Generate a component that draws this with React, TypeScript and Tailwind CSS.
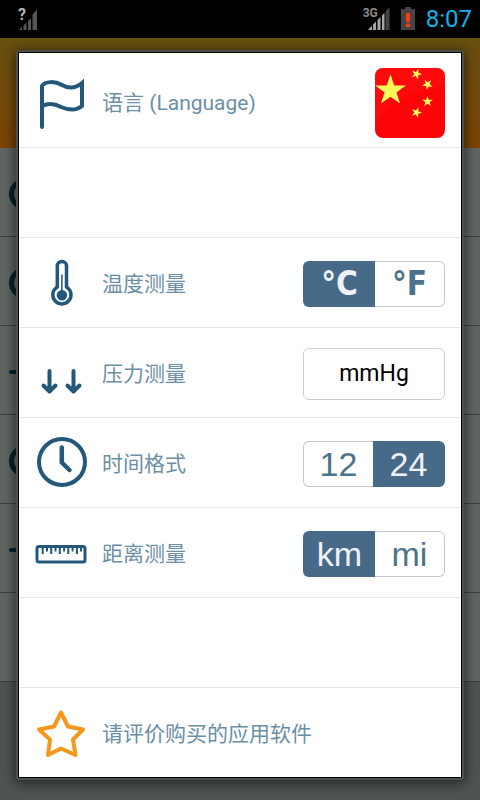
import { useState, type ReactNode } from "react";

const iconColor = "#23587a";

function FlagIcon() {
  return (
    <svg viewBox="0 0 54 54" className="w-[54px] h-[54px] shrink-0" fill="none" stroke={iconColor} strokeWidth="4" strokeLinecap="round">
      <path d="M7 51V10c3-5 13-5 20-1 7 4 14 3 20-2v23c-6 5-14 4-21 1-7-4-13-4-19-1" />
    </svg>
  );
}

function ThermometerIcon() {
  return (
    <svg viewBox="0 0 54 54" className="w-[54px] h-[54px] shrink-0" fill="none" stroke={iconColor} strokeWidth="3.500">
      <path d="M22.300 30V9a4.600 4.600 0 0 1 9.200 0v21a9.100 9.100 0 1 1-9.200 0Z" strokeLinejoin="round" />
      <circle cx="26.900" cy="38.300" r="5.200" fill={iconColor} stroke="none" />
      <path d="M26.900 17.500V36" strokeWidth="1.500" />
    </svg>
  );
}

function PressureIcon() {
  return (
    <svg viewBox="0 0 54 54" className="w-[54px] h-[54px] shrink-0" fill="none" stroke={iconColor} strokeWidth="4" strokeLinecap="round" strokeLinejoin="round">
      <path d="M14.500 24v20M8.500 38.500l6 6 6-6" />
      <path d="M38.500 24v20M32.500 38.500l6 6 6-6" />
    </svg>
  );
}

function ClockIcon() {
  return (
    <svg viewBox="0 0 54 54" className="w-[54px] h-[54px] shrink-0" fill="none" stroke={iconColor} strokeWidth="4" strokeLinecap="round" strokeLinejoin="round">
      <circle cx="27" cy="25" r="23" />
      <path d="M26.800 10.500V25.500l7.700 7.500" strokeWidth="4.500" />
    </svg>
  );
}

function RulerIcon() {
  return (
    <svg viewBox="0 0 54 54" className="w-[54px] h-[54px] shrink-0" fill="none" stroke={iconColor}>
      <rect x="2" y="19.500" width="48" height="15.500" rx="2" strokeWidth="3" />
      <path
        d="M7.700 20v7M16.200 20v7M24.800 20v7M33.300 20v7M41.900 20v7M12 20v4.500M20.500 20v4.500M29.100 20v4.500M37.600 20v4.500M46 20v4.500"
        strokeWidth="2"
      />
    </svg>
  );
}

function StarIcon() {
  return (
    <svg viewBox="0 0 54 54" className="w-[54px] h-[54px] shrink-0" fill="none" stroke="#f7981d" strokeWidth="4" strokeLinejoin="round">
      <path d="M26 5.500l7 14 15 3L38 32.500 40.500 48 26 41.500 13 48l2-15.500L4 22.500 19 19.500Z" />
    </svg>
  );
}

const starPath = "M0-10L2.300-3.100 9.500-3.100 3.700 1.200 5.900 8.100 0 3.800-5.900 8.100-3.700 1.200-9.500-3.100-2.300-3.100Z";

function ChinaFlag() {
  return (
    <svg viewBox="0 0 70 70" className="w-[70px] h-[70px] block">
      <defs>
        <clipPath id="flag-clip">
          <rect width="70" height="70" rx="8" />
        </clipPath>
      </defs>
      <g clipPath="url(#flag-clip)">
        <rect width="70" height="70" fill="#fd0409" />
        <path d="M0 0h70v18C45 20 20 32 0 52Z" fill="#ff1010" fillOpacity="0.500" />
        <g fill="#fffb57">
          <path d={starPath} transform="translate(15.500 22.500) scale(1.620)" />
          <path d={starPath} transform="translate(41.500 6) rotate(20) scale(0.560)" />
          <path d={starPath} transform="translate(52.500 16.500) rotate(42) scale(0.560)" />
          <path d={starPath} transform="translate(52.500 33.500) scale(0.560)" />
          <path d={starPath} transform="translate(41.500 44.500) rotate(20) scale(0.560)" />
        </g>
      </g>
    </svg>
  );
}

function StatusBar() {
  return (
    <header className="h-[38px] bg-black flex items-center justify-between pl-[18px] pr-2 font-['Roboto',sans-serif]">
      <div className="relative">
        <svg viewBox="0 0 20 24" className="w-5 h-6" fill="#555">
          <path d="M1 23l3-3v3zM5.500 18.500l3-3V23h-3zM10 14l3-3v12h-3zM14.500 7.500l4.500-5V23h-4.500z" />
        </svg>
        <span className="absolute -left-1 -top-0.5 w-3 text-right text-base leading-5 font-bold text-[#b5b5b5]">?</span>
      </div>
      <div className="flex items-center">
        <div className="relative mr-2.5">
          <svg viewBox="0 0 22 24" className="w-[22px] h-6">
            <path d="M0 23l4-4.500V23zM5 17.500l3-3V23H5zM9.500 13l3-3v13h-3zM14 8.500l2.500-2.500v17H14z" fill="#a9a5a5" />
            <path d="M17.500 4.500L21.500 0v23h-4z" fill="#444" />
          </svg>
          <span className="absolute right-3 -top-0.5 text-xs leading-4 font-bold text-[#8c8c8c]">3G</span>
        </div>
        <svg viewBox="0 0 16 24" className="w-4 h-6 mr-2.5">
          <path d="M5 0h6v2h4v21H1V2h4z" fill="#464444" />
          <path d="M6 6h4v9H6z" fill="#ff3a10" />
          <rect x="6" y="16.500" width="4" height="3.500" rx="1" fill="#ff3a10" />
        </svg>
        <time className="text-[24px] leading-8 text-[#10b2ec]">8:07</time>
      </div>
    </header>
  );
}

// The dimmed page that stays visible around the dialog
const dimmedRows = ["ring", "ring", "dash", "ring", "dash", "empty"];

function DimmedPage() {
  return (
    <div className="col-start-1 row-start-1 flex flex-col" aria-hidden="true">
      <div className="h-[110px] bg-linear-to-b from-[#675010] to-[#7c4404]" />
      {dimmedRows.map((kind, i) => (
        <div key={i} className="h-[89px] pl-[9px] pt-1 flex items-center bg-[#606561] border-b border-[#3a403c]">
          {kind === "ring" && <div className="size-8 rounded-full border-5 border-[#06222c]" />}
          {kind === "dash" && <div className="w-8 h-1 rounded-full bg-[#06222c]" />}
        </div>
      ))}
      <div className="flex-1 bg-[#4f5450]" />
    </div>
  );
}

function Row({ icon, label, children, first }: { icon: ReactNode; label: string; children?: ReactNode; first?: boolean }) {
  return (
    <div className={`flex items-center gap-[13px] px-4 border-b border-[#e6e6e8] last:border-b-0 last:h-[89px] ${first ? "h-[95px] pt-1.5" : "h-[90px] pt-[3px]"}`}>
      {icon}
      <span className="flex-1 min-w-0 text-[21px] leading-7 text-[#6b8fa6]">{label}</span>
      {children}
    </div>
  );
}

function Toggle({ name, label, options, initial, bold }: { name: string; label: string; options: string[]; initial: string; bold?: boolean }) {
  const [value, setValue] = useState(initial);
  return (
    <div role="radiogroup" aria-label={label} className="flex w-[142px] h-[46px] shrink-0">
      {options.map((option) => (
        <label
          key={option}
          className={`relative flex items-center justify-center cursor-pointer border first:rounded-l-md last:rounded-r-md first:border-r-0 last:border-l-0 leading-10 ${
            bold ? "text-[33px] font-['DejaVu_Sans_Condensed','DejaVu_Sans',sans-serif] font-bold" : "text-[34px] font-['Liberation_Sans',sans-serif]"
          } ${
            value === option
              ? "w-[72px] bg-[#476a88] border-[#476a88] text-[#f0f2fa]"
              : "flex-1 bg-white border-[#cbc8cb] text-[#4c738c]"
          }`}
        >
          <input
            type="radio"
            name={name}
            value={option}
            checked={value === option}
            onChange={() => setValue(option)}
            className="absolute inset-0 size-full appearance-none cursor-pointer"
          />
          {option}
        </label>
      ))}
    </div>
  );
}

function SettingsDialog() {
  return (
    <div
      role="dialog"
      aria-label="设置"
      className="col-start-1 row-start-1 self-start z-10 mx-4 mt-3 mb-5 border-2 border-[#4a514c] rounded-sm shadow-[0_2px_12px_2px_rgba(0,0,0,0.5)]"
    >
      <div className="border border-black bg-white">
        <Row first icon={<FlagIcon />} label="语言 (Language)">
          <button type="button" aria-label="中文" className="shrink-0 cursor-pointer">
            <ChinaFlag />
          </button>
        </Row>
        <div className="h-[90px] border-b border-[#e6e6e8]" />
        <Row icon={<ThermometerIcon />} label="温度测量">
          <Toggle name="temperature" label="温度测量" options={["°C", "°F"]} initial="°C" bold />
        </Row>
        <Row icon={<PressureIcon />} label="压力测量">
          <button
            type="button"
            className="w-[142px] h-[52px] shrink-0 rounded-md border border-[#d3cbd0] bg-white text-[23px] text-black cursor-pointer"
          >
            mmHg
          </button>
        </Row>
        <Row icon={<ClockIcon />} label="时间格式">
          <Toggle name="time" label="时间格式" options={["12", "24"]} initial="24" />
        </Row>
        <Row icon={<RulerIcon />} label="距离测量">
          <Toggle name="distance" label="距离测量" options={["km", "mi"]} initial="km" />
        </Row>
        <div className="h-[90px] border-b border-[#e6e6e8]" />
        <Row icon={<StarIcon />} label="请评价购买的应用软件" />
      </div>
    </div>
  );
}

export default function App() {
  return (
    <div className="min-h-screen flex flex-col bg-black font-['Roboto','Noto_Sans_CJK_SC',sans-serif]">
      <StatusBar />
      <main className="flex-1 grid grid-cols-1">
        <DimmedPage />
        <SettingsDialog />
      </main>
    </div>
  );
}
